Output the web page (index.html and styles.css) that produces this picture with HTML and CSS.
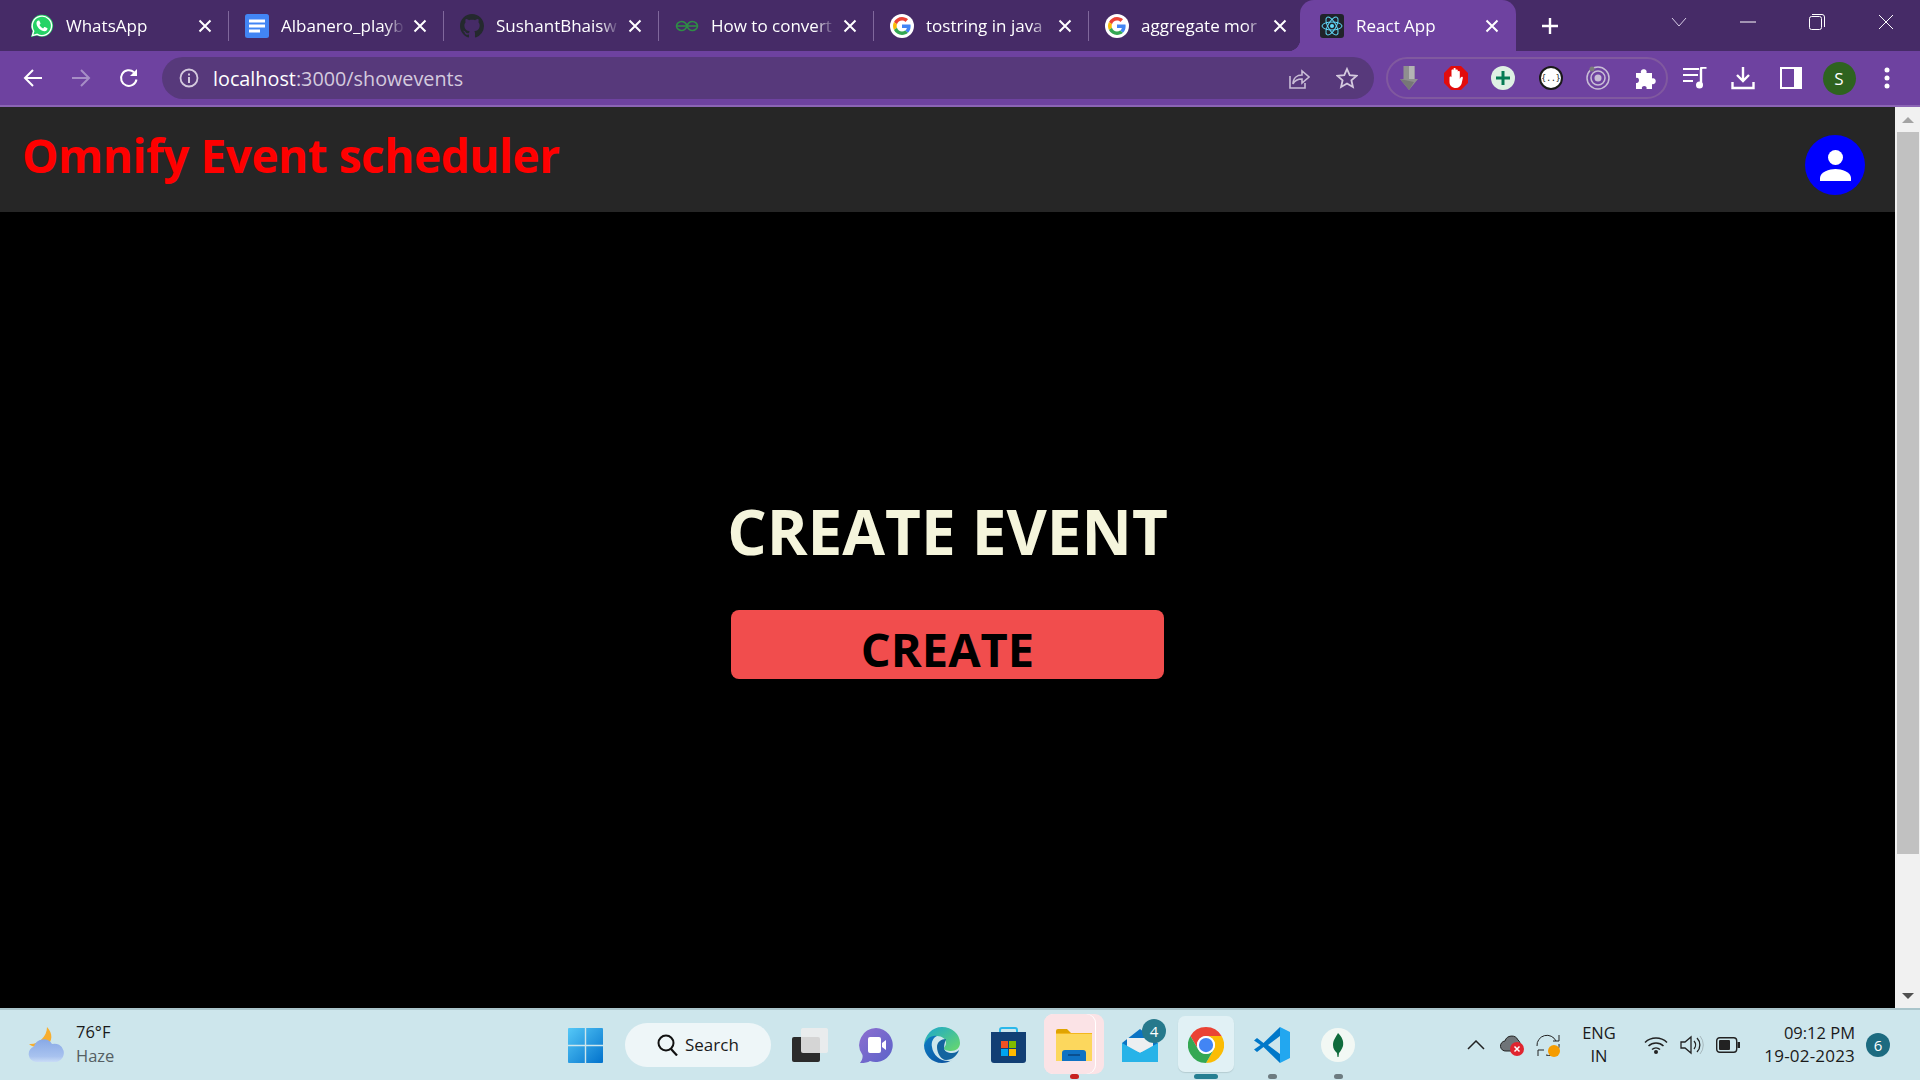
FILE: index.html
```html
<!DOCTYPE html>
<html lang="en">
<head>
    <meta charset="UTF-8">
    <meta name="viewport" content="width=device-width, initial-scale=1.0">
    <title>React App</title>
    <link rel="stylesheet" href="styles.css">
</head>
<body>
    <svg class="defs" width="0" height="0">
        <symbol id="google" viewBox="-8 -8 64 64">
            <circle cx="24" cy="24" r="32" fill="#fff"/>
            <path fill="#EA4335" d="M24 9.5c3.54 0 6.71 1.22 9.21 3.6l6.85-6.85C35.9 2.38 30.47 0 24 0 14.62 0 6.51 5.38 2.56 13.22l7.98 6.19C12.43 13.72 17.74 9.5 24 9.5z"/>
            <path fill="#4285F4" d="M46.98 24.55c0-1.57-.15-3.09-.38-4.55H24v9.02h12.94c-.58 2.96-2.26 5.48-4.78 7.18l7.73 6c4.51-4.18 7.09-10.36 7.09-17.65z"/>
            <path fill="#FBBC05" d="M10.53 28.59c-.48-1.45-.76-2.99-.76-4.59s.27-3.14.76-4.59l-7.98-6.19C.92 16.46 0 20.12 0 24c0 3.88.92 7.54 2.56 10.78l7.97-6.19z"/>
            <path fill="#34A853" d="M24 48c6.48 0 11.93-2.13 15.89-5.81l-7.73-6c-2.15 1.45-4.92 2.3-8.16 2.3-6.26 0-11.57-4.22-13.47-9.91l-7.98 6.19C6.51 42.62 14.62 48 24 48z"/>
        </symbol>
        <symbol id="tab-x" viewBox="0 0 14 14">
            <path d="M1.5 1.5l11 11M12.5 1.5l-11 11" stroke="#fff" stroke-width="2" fill="none"/>
        </symbol>
    </svg>

    <div class="tabstrip">
        <div class="tab">
            <svg class="favicon" viewBox="0 0 24 24"><path fill="#25d366" d="M1 23l1.6-5.8A11 11 0 1 1 7 21.4z"/><path fill="#25d366" stroke="#fff" stroke-width="1.4" d="M2.4 21.6l1.3-4.6A9.7 9.7 0 1 1 7.2 20.3z"/><path fill="#fff" d="M8.6 6.6c.5 0 .8 0 1 .6l.9 2c.1.3 0 .6-.2.8l-.8 1c.8 1.5 2 2.6 3.6 3.4l1-1.2c.2-.3.5-.3.8-.2l2.1 1c.3.2.5.3.5.6 0 1.6-1.5 2.8-3 2.7-3.6-.3-7.5-3.7-8-7.6-.2-1.3.7-3.1 2.1-3.1z"/></svg>
            <span class="tab-title">WhatsApp</span>
            <svg class="tab-close"><use href="#tab-x"/></svg>
        </div>
        <div class="tab">
            <svg class="favicon" viewBox="0 0 24 24"><rect width="24" height="24" rx="2.500" fill="#4285f4"/><path fill="#fff" d="M4 5.500h16v3H4zM4 10.500h16v3H4zM4 15.500h11v3H4z"/></svg>
            <span class="tab-title">Albanero_playb</span>
            <svg class="tab-close"><use href="#tab-x"/></svg>
        </div>
        <div class="tab">
            <svg class="favicon" viewBox="0 0 16 16"><path fill="#24292e" d="M8 0C3.58 0 0 3.58 0 8c0 3.54 2.29 6.53 5.47 7.59.4.07.55-.17.55-.38 0-.19-.01-.82-.01-1.49-2.01.37-2.53-.49-2.69-.94-.09-.23-.48-.94-.82-1.13-.28-.15-.68-.52-.01-.53.63-.01 1.08.58 1.23.82.72 1.21 1.87.87 2.33.66.07-.52.28-.87.51-1.07-1.78-.2-3.64-.89-3.64-3.95 0-.87.31-1.59.82-2.15-.08-.2-.36-1.02.08-2.12 0 0 .67-.21 2.2.82.64-.18 1.32-.27 2-.27.68 0 1.36.09 2 .27 1.53-1.04 2.2-.82 2.2-.82.44 1.1.16 1.92.08 2.12.51.56.82 1.27.82 2.15 0 3.07-1.87 3.75-3.65 3.95.29.25.54.73.54 1.48 0 1.07-.01 1.93-.01 2.2 0 .21.15.46.55.38A8.013 8.013 0 0016 8c0-4.42-3.58-8-8-8z"/></svg>
            <span class="tab-title">SushantBhaisw</span>
            <svg class="tab-close"><use href="#tab-x"/></svg>
        </div>
        <div class="tab">
            <svg class="favicon" viewBox="0 0 24 24"><g fill="none" stroke="#2f8d46" stroke-width="1.600"><path d="M1 12h22"/><path d="M12 12c-1-3-3-4.500-5.500-4.500S1.500 9.500 1.500 12s2.500 4.500 5 4.500S11 15 12 12c1-3 3-4.500 5.500-4.500s5 2 5 4.500-2.500 4.500-5 4.500S13 15 12 12z"/></g></svg>
            <span class="tab-title">How to convert</span>
            <svg class="tab-close"><use href="#tab-x"/></svg>
        </div>
        <div class="tab">
            <svg class="favicon"><use href="#google"/></svg>
            <span class="tab-title">tostring in java</span>
            <svg class="tab-close"><use href="#tab-x"/></svg>
        </div>
        <div class="tab">
            <svg class="favicon"><use href="#google"/></svg>
            <span class="tab-title">aggregate mor</span>
            <svg class="tab-close"><use href="#tab-x"/></svg>
        </div>
        <div class="tab tab-active">
            <svg class="favicon" viewBox="0 0 24 24"><rect width="24" height="24" rx="3" fill="#20232a"/><g fill="none" stroke="#61dafb" stroke-width="1"><ellipse cx="12" cy="12" rx="10" ry="4"/><ellipse cx="12" cy="12" rx="10" ry="4" transform="rotate(60 12 12)"/><ellipse cx="12" cy="12" rx="10" ry="4" transform="rotate(120 12 12)"/></g><circle cx="12" cy="12" r="2" fill="#61dafb"/></svg>
            <span class="tab-title">React App</span>
            <svg class="tab-close"><use href="#tab-x"/></svg>
        </div>
        <svg class="new-tab" viewBox="0 0 18 18"><path d="M9 1v16M1 9h16" stroke="#fff" stroke-width="2.400"/></svg>
        <div class="win-controls">
            <div class="win-btn"><svg width="16" height="10" viewBox="0 0 16 10"><path d="M1 1l7 8 7-8" fill="none" stroke="#d8cde6" stroke-width="1"/></svg></div>
            <div class="win-btn"><svg width="16" height="2" viewBox="0 0 16 2"><path d="M0 1h16" stroke="#fff" stroke-width="1"/></svg></div>
            <div class="win-btn"><svg width="16" height="16" viewBox="0 0 16 16"><rect x=".5" y="2.500" width="12" height="13" rx="2" fill="none" stroke="#fff"/><path d="M3 .5h10a2.500 2.500 0 0 1 2.500 2.500v10" fill="none" stroke="#fff"/></svg></div>
            <div class="win-btn"><svg width="16" height="16" viewBox="0 0 16 16"><path d="M1 1l14 14M15 1L1 15" stroke="#fff" stroke-width="1"/></svg></div>
        </div>
    </div>

    <div class="toolbar">
        <div class="nav-btn"><svg width="20" height="20" viewBox="0 0 20 20"><path d="M19 10H2M10 2l-8 8 8 8" fill="none" stroke="#fff" stroke-width="2"/></svg></div>
        <div class="nav-btn"><svg width="20" height="20" viewBox="0 0 20 20"><path d="M1 10h17M10 2l8 8-8 8" fill="none" stroke="#a78ec6" stroke-width="2"/></svg></div>
        <div class="nav-btn"><svg width="20" height="20" viewBox="0 0 20 20"><path d="M17.500 11.500A7.800 7.800 0 1 1 15 4.200" fill="none" stroke="#fff" stroke-width="2"/><path d="M18 1v7h-7z" fill="#fff"/></svg></div>
        <div class="omnibox">
            <svg class="omni-info" width="20" height="20" viewBox="0 0 20 20"><circle cx="10" cy="10" r="8.500" fill="none" stroke="#d4cade" stroke-width="1.800"/><path d="M9 9h2v6H9zM9 5.500h2v2H9z" fill="#d4cade"/></svg>
            <div class="url"><span class="url-host">localhost</span>:3000/showevents</div>
            <svg class="omni-share" width="22" height="22" viewBox="0 0 22 22"><path d="M2 9v12h15v-5" fill="none" stroke="#c9bdd6" stroke-width="1.600"/><path d="M5 17c0-6 4-9 9-9V4l7 6-7 6v-4c-4 0-7 1-9 5z" fill="none" stroke="#c9bdd6" stroke-width="1.600"/></svg>
            <svg class="omni-star" width="22" height="22" viewBox="0 0 22 22"><path d="M11 2l2.700 6.200 6.800.6-5.100 4.500 1.500 6.700L11 16.500 5.100 20l1.500-6.700L1.500 8.800l6.800-.6z" fill="none" stroke="#d4cade" stroke-width="1.800"/></svg>
        </div>
        <div class="ext-pill">
            <svg class="ext-icon" viewBox="0 0 18 24"><path d="M3.500 0h11v13H18L9 24 0 13h3.500z" fill="#8f8f8f"/><path d="M9 0h5.500v13H18L9 13z" fill="#b4b4b4"/><path d="M0 13l14 3-5 8z" fill="#777"/></svg>
            <svg class="ext-icon" viewBox="0 0 24 24"><path d="M7 0h10l7 7v10l-7 7H7l-7-7V7z" fill="#e20c0c"/><path d="M5.500 11.500c0-1.300 2-1.300 2 0V4.500c0-1.400 2-1.400 2 0V3c0-1.400 2.200-1.400 2.200 0v1.500c0-1.400 2.100-1.400 2.100 0V6c0-1.300 2-1.300 2 0v7l1-1.800c.9-1.200 2.600-.3 2 1L17.500 18c-1 2.300-2.800 4-5.500 4-4 0-6.500-2.500-6.500-6z" fill="#fff"/></svg>
            <svg class="ext-icon" viewBox="0 0 24 24"><circle cx="12" cy="12" r="12" fill="#dff0e4"/><path d="M12 5v14M5 12h14" stroke="#067a54" stroke-width="3"/></svg>
            <svg class="ext-icon" viewBox="0 0 24 24"><circle cx="12" cy="12" r="11" fill="#fff" stroke="#1a1a1a" stroke-width="2"/><text x="12" y="15" class="ext-brace">{..}</text></svg>
            <svg class="ext-icon" viewBox="0 0 24 24"><g fill="none" stroke="#c8bdd6"><circle cx="12" cy="12" r="11" stroke-width="1.500"/><circle cx="12" cy="12" r="7" stroke-width="1.500"/></g><circle cx="12" cy="12" r="3.500" fill="#c8bdd6"/><circle cx="6" cy="3" r="2.500" fill="#7b7b7b"/></svg>
            <svg class="ext-icon" viewBox="0 0 24 24"><path d="M3 7h5c-1.500-5 7-5 5.500 0H19v5.500c5-1.500 5 7 0 5.500v5h-5.500c1.500-4-6-4-4.500 0H3v-6c4 1 4-6.500 0-5z" fill="#fff"/></svg>
        </div>
        <div class="tool-btn first"><svg width="24" height="22" viewBox="0 0 24 22"><path d="M0 2h16M0 8h15M0 14h10" stroke="#fff" stroke-width="2"/><path d="M18 17V2c0-1 1-1.500 2-1.500h3.500" fill="none" stroke="#fff" stroke-width="2.400"/><circle cx="16.500" cy="18" r="3.500" fill="#fff"/></svg></div>
        <div class="tool-btn"><svg width="24" height="24" viewBox="0 0 24 24"><path d="M12 1v14M6 9l6 6 6-6" fill="none" stroke="#fff" stroke-width="2.400"/><path d="M1.500 16v6h21v-6" fill="none" stroke="#fff" stroke-width="2.400"/></svg></div>
        <div class="tool-btn"><svg width="22" height="22" viewBox="0 0 22 22"><rect x="1" y="1" width="20" height="20" fill="none" stroke="#fff" stroke-width="2"/><rect x="14" y="1" width="7" height="20" fill="#fff"/></svg></div>
        <div class="tool-btn"><div class="profile">S</div></div>
        <div class="tool-btn"><svg width="6" height="22" viewBox="0 0 6 22"><circle cx="3" cy="3" r="2.500" fill="#fff"/><circle cx="3" cy="11" r="2.500" fill="#fff"/><circle cx="3" cy="19" r="2.500" fill="#fff"/></svg></div>
    </div>

    <div class="viewport">
        <div class="app">
            <header class="app-header">
                <h1 class="brand">Omnify Event scheduler</h1>
                <div class="avatar">
                    <svg width="31" height="31" viewBox="0 0 31 31"><circle cx="15.500" cy="7.500" r="7.500" fill="#fff"/><path d="M0 31v-3c0-6 9.500-9 15.500-9s15.500 3 15.500 9v3z" fill="#fff"/></svg>
                </div>
            </header>
            <main class="hero">
                <h2 class="hero-title">CREATE EVENT</h2>
                <button class="create-btn">CREATE</button>
            </main>
        </div>
        <div class="scrollbar">
            <div class="scroll-arrow"><span class="tri-up"></span></div>
            <div class="scroll-thumb"></div>
            <div class="scroll-track"></div>
            <div class="scroll-arrow"><span class="tri-down"></span></div>
        </div>
    </div>

    <footer class="taskbar">
        <div class="weather">
            <svg width="38" height="36" viewBox="0 0 38 36"><defs><linearGradient id="cloud" x1="0" y1="0" x2="0" y2="1"><stop offset="0" stop-color="#88a9e6"/><stop offset=".75" stop-color="#a8c2ef"/><stop offset="1" stop-color="#c9dcf6"/></linearGradient></defs><path d="M19 0c6 6 6 15-1 19-5 2-13 2-17-2 9 1 18-7 18-17z" fill="#f7ae2f"/><path d="M8 35A8 8 0 0 1 6 19.500 10 10 0 0 1 24 17 9 9 0 0 1 29 35z" fill="url(#cloud)"/></svg>
            <div class="weather-text">
                <div class="temp">76°F</div>
                <div class="cond">Haze</div>
            </div>
        </div>
        <div class="task-slot">
            <svg width="35" height="35" viewBox="0 0 35 35"><defs><linearGradient id="win" x1="0" y1="0" x2="1" y2="1"><stop offset="0" stop-color="#55c8f7"/><stop offset="1" stop-color="#0272cc"/></linearGradient></defs><path fill="url(#win)" d="M1 0h15.800v16.800H0V1a1 1 0 0 1 1-1zM18.200 0H34a1 1 0 0 1 1 1v15.800H18.200zM0 18.200h16.800V35H1a1 1 0 0 1-1-1zM18.200 18.200H35V34a1 1 0 0 1-1 1H18.200z"/></svg>
        </div>
        <div class="search-pill">
            <svg width="21" height="22" viewBox="0 0 21 22"><circle cx="9" cy="9" r="7.500" fill="none" stroke="#111" stroke-width="2"/><path d="M14 15l6 6.500" stroke="#111" stroke-width="2.200"/></svg>
            <span>Search</span>
        </div>
        <div class="task-slot">
            <svg width="37" height="34" viewBox="0 0 37 34"><rect x="0" y="9" width="28" height="25" rx="2" fill="#2b2b2b"/><rect x="9" y="0" width="27" height="25" rx="2" fill="#ededed" opacity=".88"/></svg>
        </div>
        <div class="task-slot">
            <svg width="34" height="35" viewBox="0 0 34 35"><defs><linearGradient id="chat" x1="0" y1="0" x2="1" y2="1"><stop offset="0" stop-color="#8d6fd0"/><stop offset="1" stop-color="#5b62c9"/></linearGradient></defs><path fill="url(#chat)" d="M17 0a17 17 0 1 1-6 33c-2 1.500-5 2-10 2 2-3 3-5 2.500-8A17 17 0 0 1 17 0z"/><path fill="#fff" d="M9 11a2 2 0 0 1 2-2h9a2 2 0 0 1 2 2v12a2 2 0 0 1-2 2h-9a2 2 0 0 1-2-2zM23 15l4-3v10l-4-3z"/></svg>
        </div>
        <div class="task-slot">
            <svg width="36" height="36" viewBox="0 0 36 36"><defs><linearGradient id="edge1" x1="0" y1="0" x2="1" y2="1"><stop offset="0" stop-color="#1aa6cf"/><stop offset="1" stop-color="#6ad96a"/></linearGradient><linearGradient id="edge2" x1="0" y1="0" x2="1" y2="1"><stop offset="0" stop-color="#0e7ec4"/><stop offset="1" stop-color="#0b4f9c"/></linearGradient></defs><path fill="url(#edge1)" d="M18 0c10 0 18 7 18 16 0 5-4 8-9 8-4 0-7-1-7-3 0-1 2-2 2-5 0-4-4-7-9-7-6 0-11 4-13 9C1 8 8 0 18 0z"/><path fill="url(#edge2)" d="M0 18C2 12 7 8 13 9c-4 2-6 6-5 11 1 8 8 14 16 14 2 0 3 0 4-1-3 2-6 3-10 3C8 36 0 28 0 18z"/><path fill="#13649f" d="M13 20c0-5 4-8 9-8 0 1-2 4-2 9 0 3 4 5 8 5 3 0 5-1 7-3-2 6-7 10-13 10-5 0-9-7-9-13z"/></svg>
        </div>
        <div class="task-slot">
            <svg width="35" height="36" viewBox="0 0 35 36"><path d="M9 9V3a2 2 0 0 1 2-2h13a2 2 0 0 1 2 2v6" fill="none" stroke="#2ab8ea" stroke-width="2"/><path d="M0 5h35v28a3 3 0 0 1-3 3H3a3 3 0 0 1-3-3z" fill="#123f74"/><rect x="10" y="14" width="7" height="7" fill="#f25022"/><rect x="18" y="14" width="7" height="7" fill="#7fba00"/><rect x="10" y="22" width="7" height="7" fill="#00a4ef"/><rect x="18" y="22" width="7" height="7" fill="#ffb900"/></svg>
        </div>
        <div class="task-slot slot-open">
            <div class="open-back"></div>
            <div class="open-front"></div>
            <svg class="slot-icon" width="36" height="32" viewBox="0 0 36 32"><path d="M0 2a2 2 0 0 1 2-2h9l4 4h-15z" fill="#e0a400"/><path d="M0 4h36v28H0z" fill="#fcd75d"/><path d="M0 4h36v1H0z" fill="#f3b71e"/><path d="M6 32v-8a3 3 0 0 1 3-3h18a3 3 0 0 1 3 3v8z" fill="#0f72c3"/><path d="M12 25h12v2H12z" fill="#0a4f8f"/></svg>
            <div class="run-dot run-red"></div>
        </div>
        <div class="task-slot">
            <svg class="slot-icon" width="36" height="33" viewBox="0 0 36 33"><path d="M0 14L18 0l18 14v19H0z" fill="#0a73c4"/><path d="M5 9h26v10L18 24 5 19z" fill="#eceff1"/><path d="M0 14l18 10 18-10v19H0z" fill="#27b3e8"/></svg>
            <div class="mail-badge">4</div>
        </div>
        <div class="task-slot slot-active">
            <div class="active-bg"></div>
            <svg class="slot-icon" width="36" height="36" viewBox="0 0 48 48"><path fill="#ea4335" d="M24 0A24 24 0 0 1 44.800 12H24A12 12 0 0 0 13.600 30L3.200 12A24 24 0 0 1 24 0z"/><path fill="#fbbc05" d="M44.800 12A24 24 0 0 1 24 48L34.400 30A12 12 0 0 0 24 12z"/><path fill="#34a853" d="M3.200 12L13.600 30A12 12 0 0 0 34.400 30L24 48A24 24 0 0 1 3.200 12z"/><circle cx="24" cy="24" r="12" fill="#fff"/><circle cx="24" cy="24" r="9.500" fill="#4285f4"/></svg>
            <div class="run-dot run-wide"></div>
        </div>
        <div class="task-slot">
            <svg class="slot-icon" width="36" height="36" viewBox="0 0 36 36"><path d="M26 0l10 5v26l-10 5z" fill="#22a7f0"/><path d="M26 0L9.500 16 3 11l-3 2.500L6.500 18 0 22.500 3 25l6.500-5L26 36v-9L14 18 26 9z" fill="#0078c9"/></svg>
            <div class="run-dot"></div>
        </div>
        <div class="task-slot">
            <svg class="slot-icon" width="34" height="34" viewBox="0 0 34 34"><circle cx="17" cy="17" r="17" fill="#f2f8f4"/><path d="M17 5c4 4 6 8 5 13-1 3-3 6-4 7l-.5 4h-1l-.5-4c-2-2-4-4-4-8 0-5 3-8 5-12z" fill="#0f6b3c"/></svg>
            <div class="run-dot"></div>
        </div>
        <div class="tray">
            <div class="tray-slot"><svg width="18" height="10" viewBox="0 0 18 10"><path d="M1 9l8-8 8 8" fill="none" stroke="#222" stroke-width="1.500"/></svg></div>
            <div class="tray-slot"><svg width="24" height="22" viewBox="0 0 24 22"><path d="M6 17a5 5 0 0 1-1-10 7 7 0 0 1 13-1 5 5 0 0 1 2 3v8z" fill="#6f7478" stroke="#222"/><circle cx="17" cy="15" r="7" fill="#e0252f"/><path d="M14.500 12.500l5 5M19.500 12.500l-5 5" stroke="#fff" stroke-width="1.500"/></svg></div>
            <div class="tray-slot"><svg width="24" height="24" viewBox="0 0 24 24"><path d="M1 13A10 10 0 0 1 20 8M23 11a10 10 0 0 1-13 11" fill="none" stroke="#222" stroke-width="1"/><path d="M23 2v6h-6M2 23v-6h6" fill="none" stroke="#222" stroke-width="1"/><circle cx="18" cy="18" r="6" fill="#f59c00"/></svg></div>
            <div class="lang"><div>ENG</div><div>IN</div></div>
            <div class="tray-slot net"><svg width="24" height="18" viewBox="0 0 24 18"><path d="M1 6.500a16 16 0 0 1 22 0M4.500 10a11 11 0 0 1 15 0M8 13.500a6 6 0 0 1 8 0" fill="none" stroke="#222" stroke-width="1.500"/><circle cx="12" cy="16" r="2" fill="#222"/></svg></div>
            <div class="tray-slot"><svg width="24" height="20" viewBox="0 0 24 20"><path d="M1 7h4l6-5v16l-6-5H1z" fill="none" stroke="#222" stroke-width="1.300"/><path d="M14 6a6 6 0 0 1 0 8M17 3a10 10 0 0 1 0 14" fill="none" stroke="#222" stroke-width="1.300"/><path d="M20 1a14 14 0 0 1 0 18" fill="none" stroke="#a6b8bd" stroke-width="1"/></svg></div>
            <div class="tray-slot"><svg width="24" height="16" viewBox="0 0 24 16"><rect x=".7" y=".7" width="20" height="14.600" rx="3" fill="none" stroke="#222" stroke-width="1.400"/><rect x="3" y="3" width="11" height="10" rx="1" fill="#222"/><rect x="21.500" y="5" width="2.500" height="6" fill="#222"/></svg></div>
            <div class="clock"><div class="clock-time">09:12 PM</div><div>19-02-2023</div></div>
            <div class="notify">6</div>
        </div>
    </footer>
</body>
</html>
```

FILE: styles.css
```css
* {
    box-sizing: border-box;
}
html, body {
    margin: 0;
    height: 100%;
}
body {
    height: 100vh;
    overflow: hidden;
    display: flex;
    flex-direction: column;
    font-family: "Open Sans", "Noto Sans", sans-serif;
    background-color: #000;
}
.defs {
    position: absolute;
}

/* browser tabs */
.tabstrip {
    display: flex;
    height: 51px;
    flex-shrink: 0;
    padding-left: 14px;
    background-color: #462b67;
    color: #fff;
}
.tab {
    position: relative;
    display: flex;
    align-items: center;
    width: 215px;
    padding: 1px 17px 0 16px;
}
.tab::after {
    content: "";
    position: absolute;
    right: 0;
    top: 11px;
    width: 1px;
    height: 30px;
    background-color: #80689c;
}
.favicon {
    width: 24px;
    height: 24px;
    flex-shrink: 0;
}
.tab-title {
    flex: 1;
    min-width: 0;
    margin: -2px 0 0 12px;
    font-size: 17px;
    white-space: nowrap;
    -webkit-mask-image: linear-gradient(to right, #000 84%, transparent);
    mask-image: linear-gradient(to right, #000 84%, transparent);
}
.tab-close {
    width: 14px;
    height: 14px;
    flex-shrink: 0;
    margin-left: 8px;
}
.tab:nth-child(6)::after, .tab-active::after {
    display: none;
}
.tab-active {
    width: 216px;
    margin-left: -4px;
    padding-left: 20px;
    background-color: #6e42a0;
    border-radius: 14px 14px 0 0;
}
.tab-active::before {
    content: "";
    position: absolute;
    left: -12px;
    bottom: 0;
    width: 12px;
    height: 12px;
    background: radial-gradient(circle at 0 0, transparent 12px, #6e42a0 12.500px);
}
.new-tab {
    width: 18px;
    height: 18px;
    margin: 17px 0 0 25px;
}
.win-controls {
    display: flex;
    margin-left: auto;
}
.win-btn {
    display: flex;
    align-items: center;
    justify-content: center;
    width: 69px;
    height: 44px;
}

/* address bar row */
.toolbar {
    display: flex;
    align-items: center;
    height: 56px;
    flex-shrink: 0;
    padding: 0 9px;
    background-color: #6e42a0;
    border-bottom: 2px solid #8b65b5;
}
.nav-btn {
    display: flex;
    align-items: center;
    justify-content: center;
    width: 48px;
}
.omnibox {
    display: flex;
    align-items: center;
    width: 1212px;
    height: 42px;
    margin-left: 9px;
    padding: 0 16px 0 17px;
    background-color: #57397b;
    border-radius: 21px;
}
.url {
    flex: 1;
    margin-left: 14px;
    font-size: 19.800px;
    color: #d4cade;
}
.url-host {
    color: #fff;
}
.omni-share {
    margin-right: 26px;
}
.ext-pill {
    display: flex;
    align-items: center;
    justify-content: space-between;
    width: 282px;
    height: 42px;
    margin-left: 12px;
    padding: 0 9px;
    border: 2px solid #80599f;
    border-radius: 21px;
}
.ext-icon {
    width: 24px;
    height: 24px;
}
.ext-brace {
    font-family: "DejaVu Sans Mono", monospace;
    font-size: 8px;
    text-anchor: middle;
    fill: #111;
}
.tool-btn {
    display: flex;
    align-items: center;
    justify-content: center;
    width: 48px;
}
.tool-btn.first {
    margin-left: 3px;
}
.profile {
    width: 33px;
    height: 33px;
    border-radius: 50%;
    background-color: #2e631f;
    color: #fff;
    font-size: 17px;
    line-height: 33px;
    text-align: center;
}

/* page */
.viewport {
    flex: 1;
    display: flex;
    min-height: 0;
}
.app {
    flex: 1;
    display: flex;
    flex-direction: column;
    min-width: 0;
}
.app-header {
    display: flex;
    justify-content: space-between;
    height: 105px;
    padding: 28px 30px 0 22px;
    background-color: #262626;
}
.brand {
    margin: -4px 0 0;
    font-size: 46px;
    line-height: 48px;
    letter-spacing: -0.5px;
    font-weight: 700;
    color: #f00;
}
.avatar {
    display: flex;
    align-items: center;
    justify-content: center;
    width: 60px;
    height: 60px;
    border-radius: 50%;
    background-color: #00f;
}
.hero {
    flex: 1;
    display: flex;
    flex-direction: column;
    align-items: center;
    justify-content: center;
    padding-bottom: 44px;
}
.hero-title {
    margin: -2px 0 43px;
    font-size: 62px;
    line-height: 72px;
    font-weight: 700;
    color: #f5f5dc;
}
.create-btn {
    width: 433px;
    height: 69px;
    padding: 10px 0 0;
    border: none;
    border-radius: 8px;
    background-color: #f14d4d;
    color: #000;
    font-family: inherit;
    font-size: 47px;
    line-height: 59px;
    font-weight: 700;
}
.scrollbar {
    display: flex;
    flex-direction: column;
    width: 25px;
    flex-shrink: 0;
    background-color: #f1f1f1;
}
.scroll-arrow {
    display: flex;
    align-items: center;
    justify-content: center;
    height: 25px;
}
.scroll-thumb {
    height: 722px;
    margin: 0 1px 0 2px;
    background-color: #c1c1c1;
}
.scroll-track {
    flex: 1;
}
.tri-up, .tri-down {
    width: 0;
    height: 0;
    border-left: 6px solid transparent;
    border-right: 6px solid transparent;
}
.tri-up {
    border-bottom: 6px solid #a3a3a3;
}
.tri-down {
    border-top: 6px solid #505050;
}

/* windows taskbar */
.taskbar {
    display: flex;
    align-items: center;
    height: 72px;
    flex-shrink: 0;
    padding-right: 30px;
    background-color: #cde6ec;
    border-top: 2px solid #aac5cb;
    color: #1a1a1a;
}
.weather {
    display: flex;
    align-items: center;
    width: 552px;
    padding-left: 28px;
}
.weather-text {
    margin: -2px 0 0 10px;
    font-size: 16.500px;
    line-height: 24px;
}
.cond {
    color: #555f63;
}
.task-slot {
    position: relative;
    display: flex;
    align-items: center;
    justify-content: center;
    width: 66px;
    height: 70px;
}
.search-pill {
    display: flex;
    align-items: center;
    width: 146px;
    height: 44px;
    margin: 0 6px 0 7px;
    padding-left: 32px;
    border-radius: 22px;
    background-color: #eef6f8;
    font-size: 17px;
}
.search-pill span {
    margin: -2px 0 0 7px;
}
.slot-icon {
    position: relative;
}
.open-front, .open-back {
    position: absolute;
    left: 3px;
    top: 4px;
    height: 60px;
    border-radius: 9px;
    background-color: #fbe3e6;
}
.open-front {
    width: 51px;
    box-shadow: 1px 0 0 #fff;
}
.open-back {
    width: 60px;
}
.active-bg {
    position: absolute;
    left: 5px;
    top: 6px;
    width: 56px;
    height: 56px;
    border-radius: 7px;
    background-color: #e1f1f5;
    box-shadow: 0 1px 1px #b5ccd2;
}
.run-dot {
    position: absolute;
    left: 29px;
    bottom: 1px;
    width: 9px;
    height: 5px;
    border-radius: 3px;
    background-color: #6d7b80;
}
.run-red {
    background-color: #c8201f;
}
.run-wide {
    left: 21px;
    width: 24px;
    background-color: #267f92;
}
.mail-badge {
    position: absolute;
    left: 35px;
    top: 9px;
    width: 24px;
    height: 24px;
    border-radius: 50%;
    background-color: #26798c;
    color: #fff;
    font-size: 15px;
    line-height: 24px;
    text-align: center;
}
.tray {
    display: flex;
    align-items: center;
    margin-left: auto;
}
.tray-slot {
    display: flex;
    align-items: center;
    justify-content: center;
    width: 36px;
}
.lang {
    width: 66px;
    margin-top: -2px;
    font-size: 16.500px;
    line-height: 23px;
    text-align: center;
}
.tray-slot.net {
    margin-left: 6px;
}
.clock {
    width: 109px;
    margin-top: -2px;
    font-size: 17px;
    line-height: 23px;
    letter-spacing: .2px;
    text-align: right;
    white-space: nowrap;
}
.clock-time {
    letter-spacing: 0;
    font-size: 16.500px;
}
.notify {
    width: 24px;
    height: 24px;
    margin-left: 11px;
    border-radius: 50%;
    background-color: #1c6b80;
    color: #fff;
    font-size: 15px;
    line-height: 24px;
    text-align: center;
}
```
